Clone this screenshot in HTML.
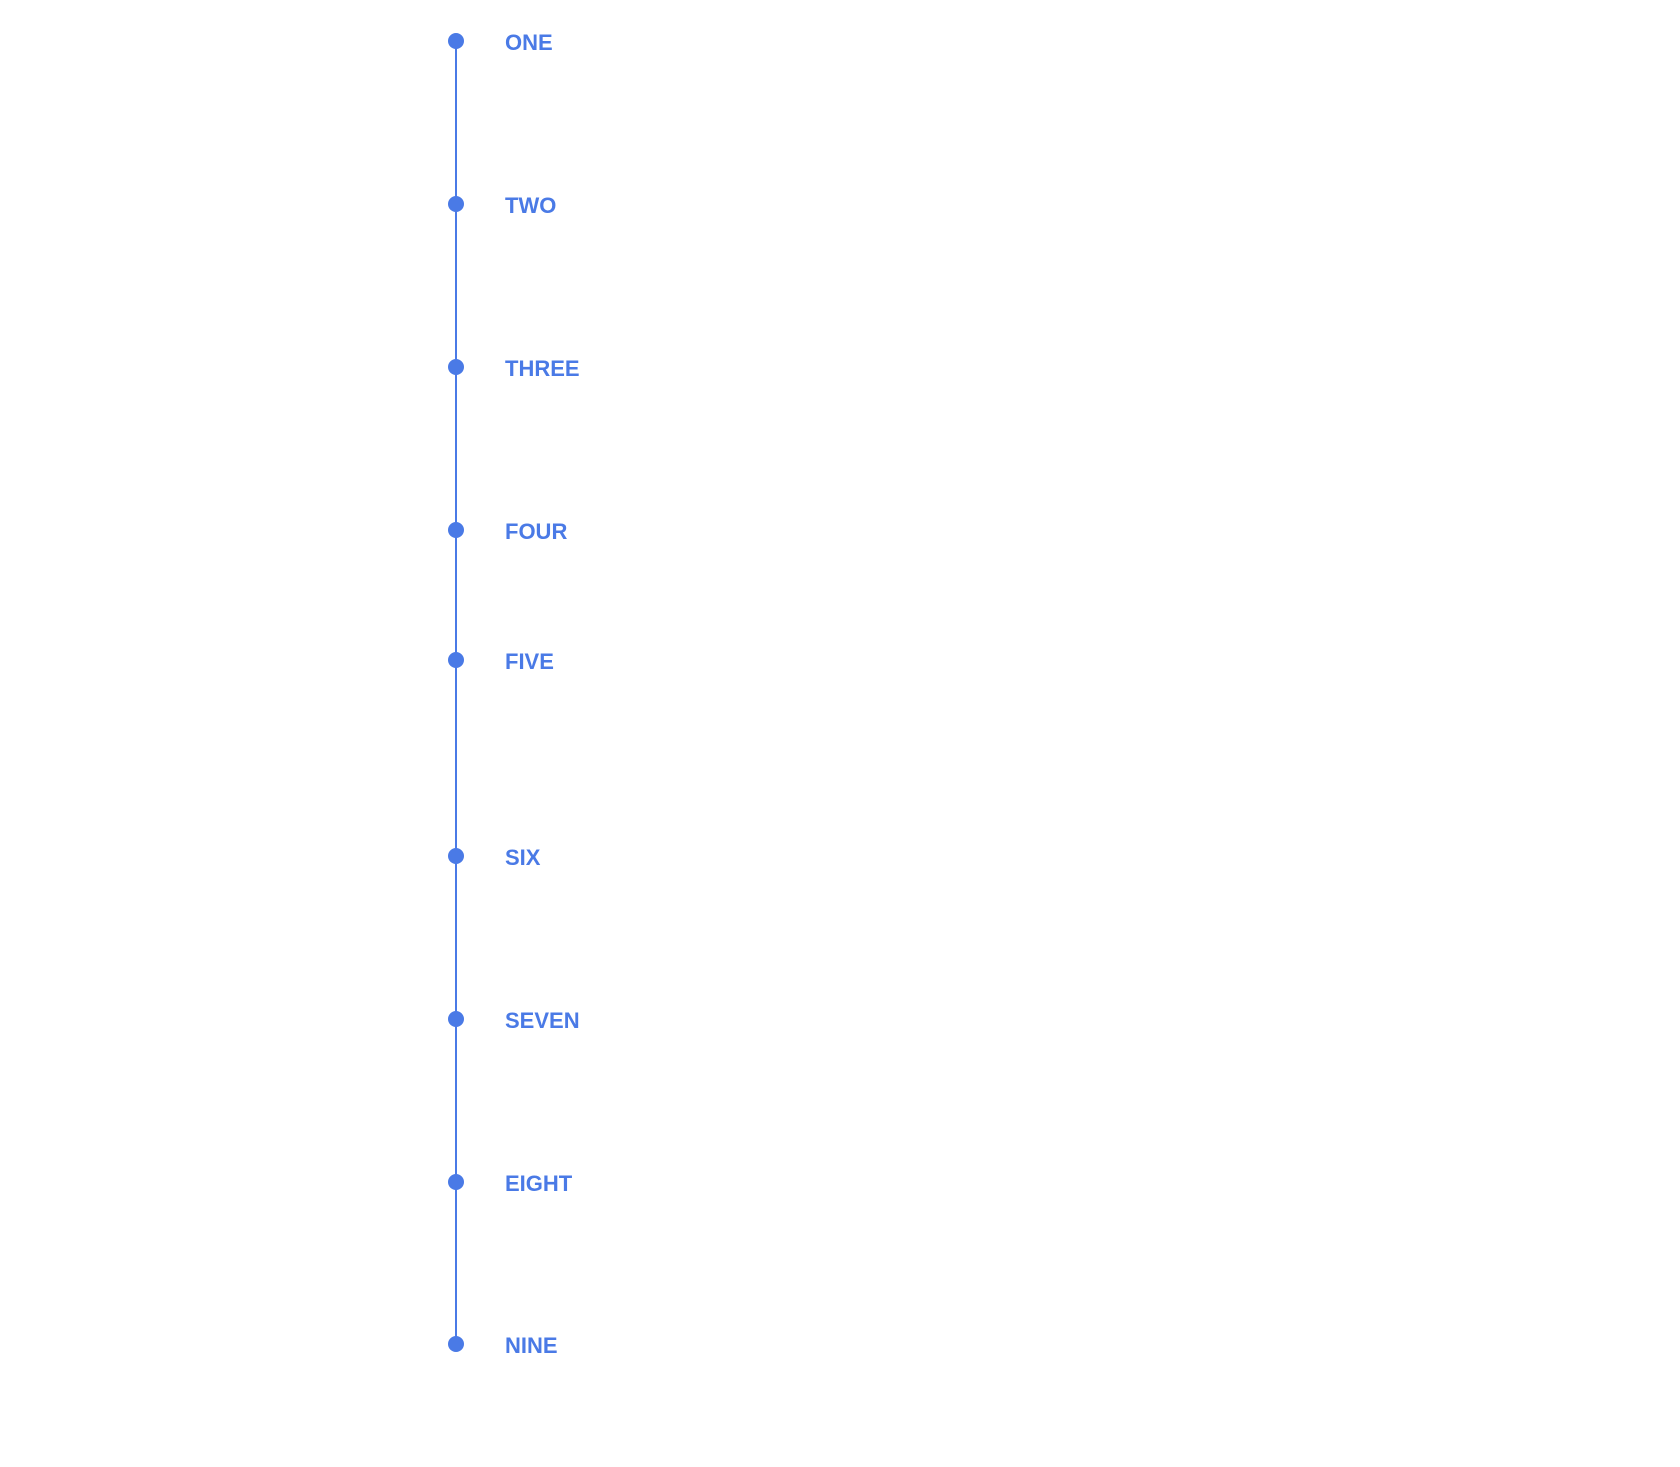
<!DOCTYPE html>
<html><head><meta charset="utf-8"><style>
html,body{margin:0;padding:0;background:#fff;width:1680px;height:1467px;overflow:hidden}
.line{position:absolute;left:455px;top:41px;width:2px;height:1303px;background:#4a7ae6}
.dot{position:absolute;left:448px;width:16px;height:16px;border-radius:50%;background:#4a7ae6}
.t{position:absolute;left:505px;font:bold 22px "Liberation Sans",sans-serif;color:#4a7ae6;line-height:24px}
</style></head><body>
<div class="line"></div>
<div class="dot" style="top:33px"></div><div class="t" style="top:31px">ONE</div>
<div class="dot" style="top:196px"></div><div class="t" style="top:194px">TWO</div>
<div class="dot" style="top:359px"></div><div class="t" style="top:357px">THREE</div>
<div class="dot" style="top:522px"></div><div class="t" style="top:520px">FOUR</div>
<div class="dot" style="top:652px"></div><div class="t" style="top:650px">FIVE</div>
<div class="dot" style="top:848px"></div><div class="t" style="top:846px">SIX</div>
<div class="dot" style="top:1011px"></div><div class="t" style="top:1009px">SEVEN</div>
<div class="dot" style="top:1174px"></div><div class="t" style="top:1172px">EIGHT</div>
<div class="dot" style="top:1336px"></div><div class="t" style="top:1334px">NINE</div>
</body></html>
